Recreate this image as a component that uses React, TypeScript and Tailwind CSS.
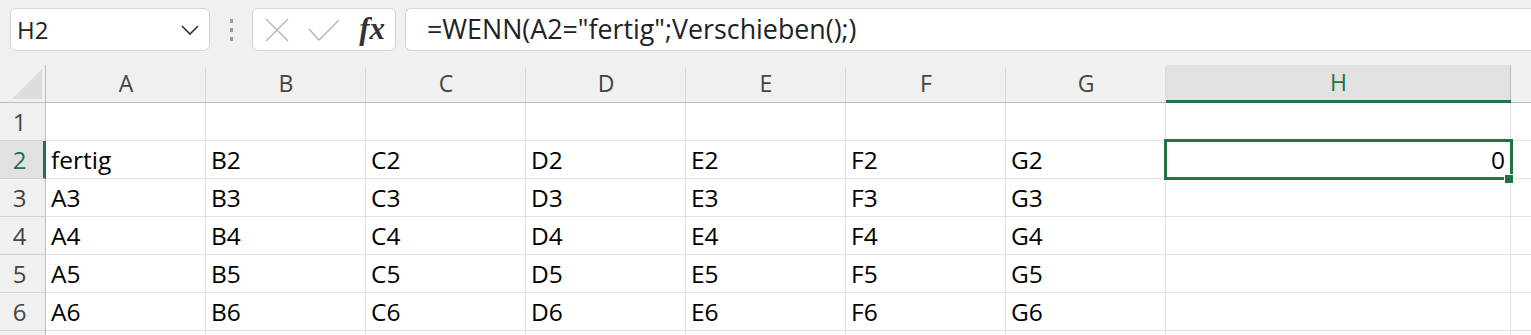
const cols = ["A", "B", "C", "D", "E", "F", "G", "H"];
const rows = [1, 2, 3, 4, 5, 6, 7];

function cellText(col: string, row: number) {
  if (row === 1 || row === 7) return "";
  if (col === "H") return row === 2 ? "0" : "";
  if (col === "A" && row === 2) return "fertig";
  return col + row;
}

export default function App() {
  return (
    <div
      className="w-[1531px] h-[335px] overflow-hidden bg-[#f0f0f0] text-black"
      style={{ fontFamily: '"Open Sans", "Noto Sans", sans-serif' }}
    >
      {/* formula bar */}
      <div className="h-[65px] flex items-start pt-[8px]">
        <div className="ml-[10px] w-[200px] h-[43px] bg-white border border-[#d5d5d5] rounded-[6px] flex items-center justify-between pl-[6px] pr-[9px]">
          <span className="text-[24px] text-[#222]">H2</span>
          <svg width="20" height="12" viewBox="0 0 20 12" fill="none">
            <path d="M2 2 L10 10 L18 2" stroke="#333" strokeWidth="1.6" />
          </svg>
        </div>
        <div className="w-[42px] h-[43px] flex flex-col items-center justify-center gap-[5px]">
          <div className="w-[3px] h-[4px] bg-[#9a9a9a]" />
          <div className="w-[3px] h-[4px] bg-[#9a9a9a]" />
          <div className="w-[3px] h-[4px] bg-[#9a9a9a]" />
        </div>
        <div className="w-[144px] h-[43px] bg-white border border-[#d5d5d5] rounded-[6px] flex items-center pl-[11px] pr-[10px]">
          <svg width="26" height="26" viewBox="0 0 26 26" fill="none">
            <path d="M2 2 L24 24 M24 2 L2 24" stroke="#b4b4b4" strokeWidth="1.4" />
          </svg>
          <svg className="ml-[18px]" width="32" height="22" viewBox="0 0 32 22" fill="none">
            <path d="M1 10 L11 21 L31 1" stroke="#b4b4b4" strokeWidth="1.4" />
          </svg>
          <span
            className="ml-auto italic font-bold text-[31px] leading-none text-[#333] mb-[2px]"
            style={{ fontFamily: '"Liberation Serif", "DejaVu Serif", serif' }}
          >
            fx
          </span>
        </div>
        <div className="ml-[9px] flex-1 h-[43px] bg-white border border-r-0 border-[#d5d5d5] rounded-l-[6px] flex items-center pl-[21px]">
          <span className="text-[26.8px] text-[#222]">=WENN(A2="fertig";Verschieben();)</span>
        </div>
      </div>

      {/* sheet */}
      <div className="relative">
        <div className="grid grid-cols-[46px_repeat(7,160px)_345px_1fr]">
          {/* column headers */}
          <div className="h-[38px] border-b border-r border-[#bdbdbd] flex items-end justify-end pr-[3px] pb-[3px]">
            <svg width="30" height="30" viewBox="0 0 30 30">
              <path d="M30 0 L30 30 L0 30 Z" fill="#dcdcdc" />
            </svg>
          </div>
          {cols.map((c) =>
            c === "H" ? (
              <div
                key={c}
                className="h-[38px] bg-[#e1e1e1] border-b-[3px] border-[#217346] flex items-center justify-center text-[23px] text-[#217346] relative"
              >
                {c}
                <div className="absolute right-0 top-0 h-[35px] w-[1px] bg-[#bdbdbd]" />
              </div>
            ) : (
              <div
                key={c}
                className="h-[38px] border-b border-[#bdbdbd] flex items-center justify-center text-[23px] text-[#444] relative"
              >
                {c}
                <div className="absolute right-0 top-[2px] h-[35px] w-[1px] bg-[#dadada]" />
              </div>
            )
          )}
          <div className="h-[38px] border-b border-[#bdbdbd]" />

          {rows.map((r) => (
            <div key={r} className="contents">
              <div
                className={
                  r === 2
                    ? "h-[38px] bg-[#e1e1e1] border-b border-[#d4d4d4] border-r-[3px] border-r-[#217346] flex items-center justify-center pr-[4px] text-[24px] text-[#217346]"
                    : "h-[38px] border-b border-[#d4d4d4] border-r border-r-[#bdbdbd] flex items-center justify-center pr-[6px] text-[24px] text-[#444]"
                }
              >
                {r === 7 ? "" : r}
              </div>
              {cols.map((c) => (
                <div
                  key={c}
                  className={
                    "h-[38px] bg-white border-b border-r border-[#e1e1e1] flex items-center text-[24.5px] px-[5px] pt-[2px] " +
                    (c === "H" ? "justify-end" : "justify-start")
                  }
                >
                  {cellText(c, r)}
                </div>
              ))}
              <div className="h-[38px] bg-white border-b border-[#e1e1e1]" />
            </div>
          ))}
        </div>

        {/* active cell H2 */}
        <div className="absolute left-[1164px] top-[74px] w-[349px] h-[41px] border-[3px] border-[#217346]" />
        <div className="absolute left-[1504px] top-[109px] w-[10px] h-[10px] bg-[#217346] border border-white" />
      </div>
    </div>
  );
}
